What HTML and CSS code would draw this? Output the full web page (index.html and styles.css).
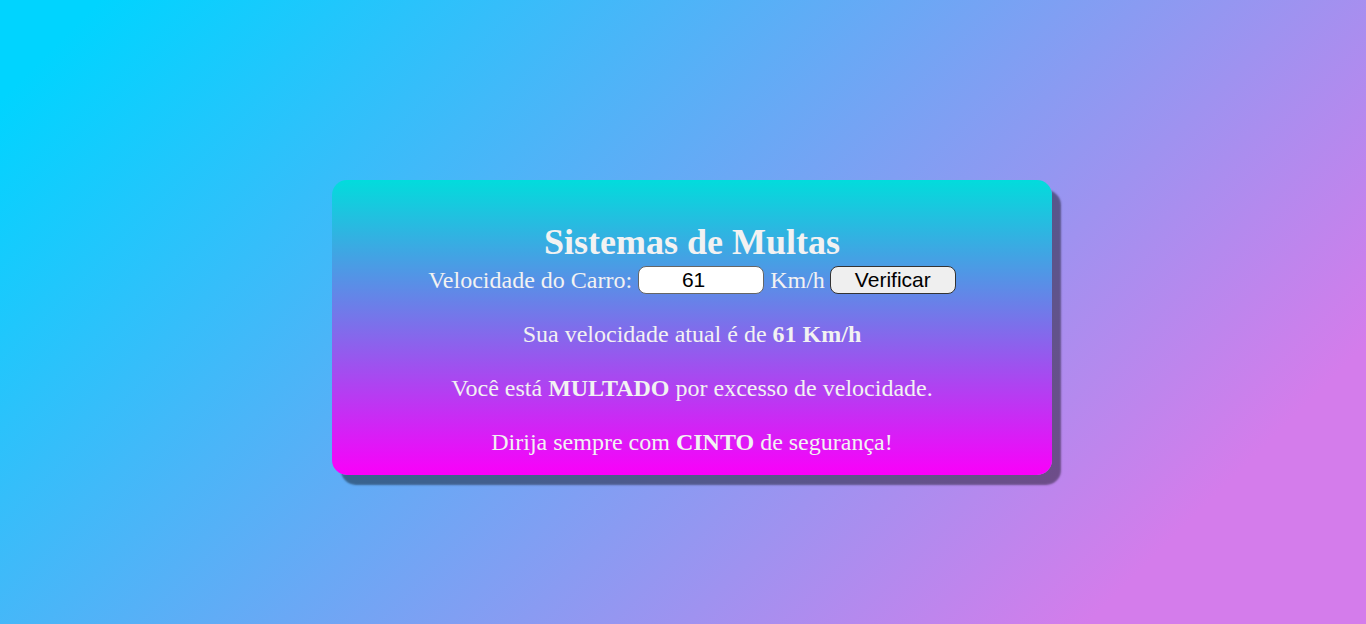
FILE: index.html
```html
<!DOCTYPE html>
<html lang="pt-BR">
<head>
<meta charset="utf-8">
<title>Sistemas de Multas</title>
<link rel="stylesheet" href="styles.css">
</head>
<body>
<main class="card">
  <h1 class="title">Sistemas de Multas</h1>
  <div class="form-row">
    <label for="vel">Velocidade do Carro:</label>
    <input id="vel" class="speed" type="number" value="61">
    <span>Km/h</span>
    <button class="btn" type="button">Verificar</button>
  </div>
  <section class="result">
    <p>Sua velocidade atual é de <strong>61 Km/h</strong></p>
    <p>Você está <strong>MULTADO</strong> por excesso de velocidade.</p>
    <p>Dirija sempre com <strong>CINTO</strong> de segurança!</p>
  </section>
</main>
</body>
</html>
```

FILE: styles.css
```css
html, body {
  margin: 0;
  height: 100%;
}
body {
  font-family: "Liberation Serif", "Times New Roman", serif;
  background: linear-gradient(135deg, #00d4ff 5%, #d47ceb 86%);
  display: flex;
  justify-content: center;
  align-items: center;
  color: #f2f2f2;
}
.card {
  width: 720px;
  height: 295px;
  box-sizing: border-box;
  padding: 42px 20px 0;
  border-radius: 15px;
  background: linear-gradient(to bottom, #02dcdc, #fa00fa);
  box-shadow: 9px 10px 2px rgba(0, 0, 0, 0.42);
  text-align: center;
  font-size: 24px;
  margin: 31px 0 0 18px;
}
.title {
  font-size: 36px;
  margin: 0;
  line-height: 41px;
}
.form-row {
  display: flex;
  justify-content: center;
  align-items: center;
  gap: 6px;
  margin-top: 3px;
  height: 28px;
}
.speed {
  width: 126px;
  height: 28px;
  box-sizing: border-box;
  border: 1px solid #666;
  border-radius: 8px;
  background: #fff;
  font-family: "Liberation Sans", Arial, sans-serif;
  font-size: 21px;
  color: #000;
  text-align: center;
  padding: 0 3px;
  appearance: textfield;
}
.btn {
  width: 126px;
  height: 28px;
  box-sizing: border-box;
  border: 1px solid #333;
  border-radius: 8px;
  background: #efefef;
  font-family: "Liberation Sans", Arial, sans-serif;
  font-size: 21px;
  color: #000;
  padding: 0;
  margin-left: -1px;
}
.result p {
  margin: 27px 0 0;
  line-height: 27px;
}
```
